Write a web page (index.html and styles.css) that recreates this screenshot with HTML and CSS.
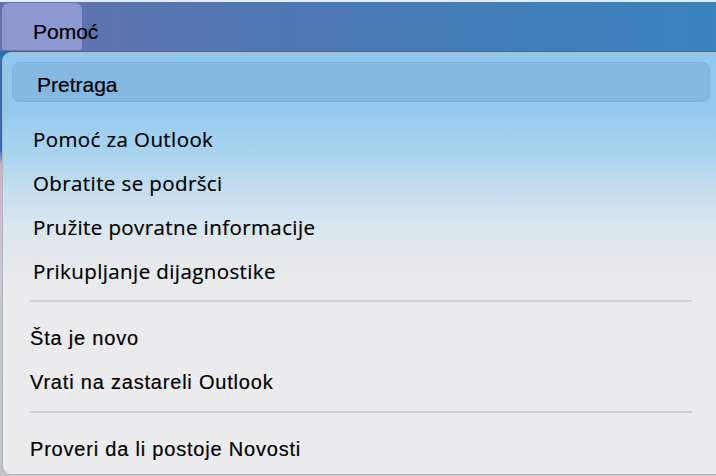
FILE: index.html
```html
<!DOCTYPE html>
<html>
<head>
<meta charset="utf-8">
<title>Pomoć</title>
<link rel="stylesheet" href="styles.css">
</head>
<body>

<div class="menubar">
    <div class="menubar-item">Pomoć</div>
</div>

<div class="menu">
    <div class="search">Pretraga</div>

    <div class="group upper">
        <div class="item">Pomoć za Outlook</div>
        <div class="item">Obratite se podršci</div>
        <div class="item">Pružite povratne informacije</div>
        <div class="item">Prikupljanje dijagnostike</div>
    </div>

    <div class="separator"></div>

    <div class="group lower">
        <div class="item">Šta je novo</div>
        <div class="item">Vrati na zastareli Outlook</div>
    </div>

    <div class="separator"></div>

    <div class="group lower">
        <div class="item">Proveri da li postoje Novosti</div>
    </div>
</div>

</body>
</html>
```

FILE: styles.css
```css
html {
    width: 716px;
    height: 476px;
    overflow: hidden;
}

body {
    margin: 0;
    width: 716px;
    height: 476px;
    overflow: hidden;
    color: #000;
    font-family: "Liberation Sans", Arial, sans-serif;
    -webkit-text-stroke: 0.2px #000;
    background: linear-gradient(180deg, #2d6fb2 0, #2d6fb2 150px, #cdb4c6 165px, #d6c6d0 290px, #c4c4c4 310px, #c4c4c4 100%);
}

.menubar {
    height: 48px;
    border-top: 2px solid #e6ebf1;
    padding: 1px 0 0 2px;
    background: linear-gradient(90deg, #6273ac 0, #4f78b3 40%, #3f7fbb 75%, #3a83bf 100%);
}

.menubar-item {
    width: 49px;
    height: 30px;
    padding: 17px 0 0 31px;
    line-height: 24px;
    font-size: 21px;
    background-color: #8d99d0;
    border-radius: 7px 7px 3px 3px;
}

.menu {
    height: 412px;
    margin: 1px -6px 0 2px;
    padding: 9px 11px 0 9px;
    border: 1px solid #a9b9c8;
    border-radius: 9px 0 0 9px;
    background: linear-gradient(180deg, #90c7ee 0, #91c8ee 50px, #a9d4ef 100px, #c3ddf0 135px, #d8e6ee 170px, #e4e9ec 205px, #ebebed 240px, #ececee 100%);
}

.search {
    height: 35px;
    padding: 3px 0 0 24px;
    line-height: 38px;
    font-size: 21px;
    border: 1px solid #7fb0da;
    border-radius: 8px;
    background-color: #85b9e2;
}

.group {
    display: flex;
    flex-direction: column;
}

.upper {
    margin-top: 15px;
}

.item {
    height: 44px;
    line-height: 44px;
    white-space: nowrap;
}

.upper .item {
    padding-left: 21px;
    font-family: "Open Sans", sans-serif;
    font-size: 20.5px;
    letter-spacing: 0.4px;
}

.lower .item {
    padding-left: 18px;
    font-size: 20px;
    letter-spacing: 0.8px;
}

.separator {
    height: 2px;
    margin: 7px 18px 14px 18px;
    background-color: #d2d2d4;
}
```
